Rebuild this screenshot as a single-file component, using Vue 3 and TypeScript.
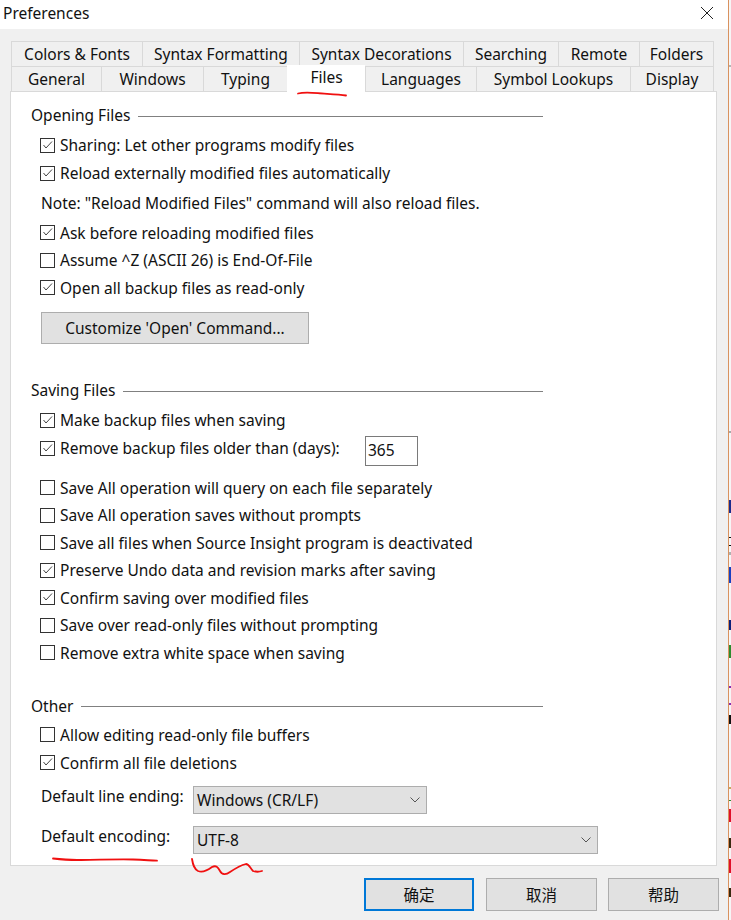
<script setup lang="ts">
const topTabs = [
  { label: 'Colors & Fonts', w: 131 },
  { label: 'Syntax Formatting', w: 157 },
  { label: 'Syntax Decorations', w: 164 },
  { label: 'Searching', w: 95 },
  { label: 'Remote', w: 81 },
  { label: 'Folders', w: 75 },
]
const bottomTabs = [
  { label: 'General', w: 90 },
  { label: 'Windows', w: 102 },
  { label: 'Typing', w: 84 },
  { label: 'Files', w: 78, active: true },
  { label: 'Languages', w: 111 },
  { label: 'Symbol Lookups', w: 154 },
  { label: 'Display', w: 84 },
]
const openingA = [
  { label: 'Sharing: Let other programs modify files', on: true },
  { label: 'Reload externally modified files automatically', on: true },
]
const openingB = [
  { label: 'Ask before reloading modified files', on: true },
  { label: 'Assume ^Z (ASCII 26) is End-Of-File', on: false },
  { label: 'Open all backup files as read-only', on: true },
]
const savingB = [
  { label: 'Save All operation will query on each file separately', on: false },
  { label: 'Save All operation saves without prompts', on: false },
  { label: 'Save all files when Source Insight program is deactivated', on: false },
  { label: 'Preserve Undo data and revision marks after saving', on: true },
  { label: 'Confirm saving over modified files', on: true },
  { label: 'Save over read-only files without prompting', on: false },
  { label: 'Remove extra white space when saving', on: false },
]
const other = [
  { label: 'Allow editing read-only file buffers', on: false },
  { label: 'Confirm all file deletions', on: true },
]
// bits of the window behind the dialog, visible past its right edge
const behind = [
  { y: 65, h: 2, c: '#b5b5b5' },
  { y: 431, h: 2, c: '#a8a8a8' },
  { y: 500, h: 13, c: '#1c2a8c' },
  { y: 537, h: 1, c: '#111' },
  { y: 545, h: 1, c: '#111' },
  { y: 552, h: 3, c: '#b0b0b0' },
  { y: 567, h: 16, c: '#1a3fc0' },
  { y: 620, h: 10, c: '#0b1f7a' },
  { y: 645, h: 13, c: '#2e8b2e' },
  { y: 686, h: 2, c: '#8a2bb0' },
  { y: 703, h: 2, c: '#8a2bb0' },
  { y: 715, h: 9, c: '#111' },
  { y: 787, h: 2, c: '#c8a860' },
  { y: 800, h: 1, c: '#2e8b2e' },
  { y: 809, h: 13, c: '#e0102a' },
  { y: 838, h: 10, c: '#3a2a10' },
  { y: 859, h: 14, c: '#e0102a' },
  { y: 888, h: 9, c: '#3a2a10' },
]
</script>

<template>
  <div class="screen">
    <div class="dialog">
      <div class="titlebar">
        <span class="title">Preferences</span>
        <svg class="close" width="14" height="14" viewBox="0 0 14 14">
          <path d="M1 1L13 13M13 1L1 13" stroke="#222" stroke-width="1" fill="none" />
        </svg>
      </div>

      <div class="body">
        <div class="tabs">
          <div class="tab-row">
            <div v-for="t in topTabs" :key="t.label" class="tab" :style="{ width: t.w + 'px' }">{{ t.label }}</div>
          </div>
          <div class="tab-row">
            <div
              v-for="t in bottomTabs"
              :key="t.label"
              class="tab"
              :class="{ active: t.active }"
              :style="{ width: t.w + 'px' }"
            >{{ t.label }}</div>
          </div>
        </div>

        <div class="panel">
          <div class="heading"><span>Opening Files</span><i></i></div>
          <div class="rows first">
            <label v-for="c in openingA" :key="c.label" class="check">
              <span class="box"><svg v-if="c.on" width="13" height="13" viewBox="0 0 13 13"><path d="M2.5 6L5 9L11 2.5" stroke="#444" stroke-width="1" fill="none" /></svg></span>
              {{ c.label }}
            </label>
            <div class="note">Note: "Reload Modified Files" command will also reload files.</div>
            <label v-for="c in openingB" :key="c.label" class="check">
              <span class="box"><svg v-if="c.on" width="13" height="13" viewBox="0 0 13 13"><path d="M2.5 6L5 9L11 2.5" stroke="#444" stroke-width="1" fill="none" /></svg></span>
              {{ c.label }}
            </label>
          </div>
          <button class="btn customize">Customize 'Open' Command...</button>

          <div class="heading saving"><span>Saving Files</span><i></i></div>
          <div class="rows first">
            <label class="check">
              <span class="box"><svg width="13" height="13" viewBox="0 0 13 13"><path d="M2.5 6L5 9L11 2.5" stroke="#444" stroke-width="1" fill="none" /></svg></span>
              Make backup files when saving
            </label>
            <div class="check">
              <span class="box"><svg width="13" height="13" viewBox="0 0 13 13"><path d="M2.5 6L5 9L11 2.5" stroke="#444" stroke-width="1" fill="none" /></svg></span>
              <span class="days-label">Remove backup files older than (days):</span>
              <span class="days-input">365</span>
            </div>
          </div>
          <div class="rows later">
            <label v-for="c in savingB" :key="c.label" class="check">
              <span class="box"><svg v-if="c.on" width="13" height="13" viewBox="0 0 13 13"><path d="M2.5 6L5 9L11 2.5" stroke="#444" stroke-width="1" fill="none" /></svg></span>
              {{ c.label }}
            </label>
          </div>

          <div class="heading other"><span>Other</span><i></i></div>
          <div class="rows first other-rows">
            <label v-for="c in other" :key="c.label" class="check">
              <span class="box"><svg v-if="c.on" width="13" height="13" viewBox="0 0 13 13"><path d="M2.5 6L5 9L11 2.5" stroke="#444" stroke-width="1" fill="none" /></svg></span>
              {{ c.label }}
            </label>
          </div>

          <div class="field">
            <span class="field-label">Default line ending:</span>
            <div class="select short">
              Windows (CR/LF)
              <svg width="10" height="6" viewBox="0 0 10 6"><path d="M0.5 0.5L5 5L9.5 0.5" stroke="#555" fill="none" /></svg>
            </div>
          </div>
          <div class="field">
            <span class="field-label">Default encoding:</span>
            <div class="select wide">
              UTF-8
              <svg width="10" height="6" viewBox="0 0 10 6"><path d="M0.5 0.5L5 5L9.5 0.5" stroke="#555" fill="none" /></svg>
            </div>
          </div>
        </div>

        <div class="actions">
          <button class="btn action primary">确定</button>
          <button class="btn action">取消</button>
          <button class="btn action">帮助</button>
        </div>
      </div>
    </div>

    <div class="strip">
      <span
        v-for="b in behind"
        :key="b.y"
        class="bit"
        :style="{ top: b.y + 'px', height: b.h + 'px', background: b.c }"
      ></span>
    </div>

    <svg class="ink" width="731" height="920" viewBox="0 0 731 920">
      <path d="M298 93.5C304 92 310 92.5 318 93.2S338 94 346 95.5" />
      <path d="M53 858.5C62 859.5 70 860 77 860S120 859 133 859.5S150 860.5 157 860.7" />
      <path d="M192 859C193 865 194 869 198 871C203 873 208 870 212 867C216 865 218 867 220 871C222 875 226 875 230 872C236 868 242 865 246 864C249 864 250 868 253 871C256 872 259 872 262 871" />
    </svg>
  </div>
</template>

<style>
html,
body {
  margin: 0;
  background: #fff;
}
</style>

<style scoped>
.screen {
  position: relative;
  display: flex;
  width: 731px;
  height: 920px;
  overflow: hidden;
  font-family: "Noto Sans", "Noto Sans CJK SC", sans-serif;
  font-size: 15.5px;
  color: #111;
}

.dialog {
  width: 728px;
  height: 920px;
  flex: none;
  display: flex;
  flex-direction: column;
  background: #f0f0f0;
  border-right: 1px solid #d9925f;
}

.titlebar {
  box-sizing: border-box;
  height: 29px;
  flex: none;
  background: #fff;
  display: flex;
  align-items: center;
  justify-content: space-between;
  padding: 0 14px 3px 3px;
}

.body {
  flex: 1;
  padding: 12px 0 0 10px;
}

.tabs {
  padding-left: 1px;
}

.tab-row {
  display: flex;
  height: 25px;
}

.tab {
  box-sizing: border-box;
  height: 26px;
  line-height: 24px;
  text-align: center;
  background: #f0f0f0;
  border: 1px solid #d9d9d9;
  border-right-width: 0;
}

.tab:last-child {
  border-right-width: 1px;
}

.tab.active {
  position: relative;
  z-index: 2;
  height: 28px;
  margin-top: -1px;
  line-height: 22px;
  background: #fff;
  border-color: #fff;
}

.panel {
  box-sizing: border-box;
  width: 707px;
  height: 775px;
  padding: 14px 0 0 20px;
  background: #fff;
  border: 1px solid #d9d9d9;
  position: relative;
  z-index: 1;
}

.heading {
  display: flex;
  align-items: center;
  height: 20px;
  width: 512px;
  gap: 8px;
}

.heading span {
  position: relative;
  top: -1px;
}

.heading i {
  flex: 1;
  height: 1px;
  background: #808080;
}

.saving {
  margin-top: 37px;
}

.other {
  margin-top: 30px;
}

.rows {
  display: flex;
  flex-direction: column;
  padding-left: 9px;
}

.first {
  margin-top: 5px;
}

.other-rows {
  margin-top: 4px;
}

.later {
  margin-top: 12px;
}

.check {
  display: flex;
  align-items: center;
  gap: 5px;
  height: 27.5px;
  white-space: nowrap;
  line-height: 24px;
}

.first .check {
  height: 28px;
}

.first .note ~ .check {
  height: 27.5px;
}

.box {
  box-sizing: border-box;
  width: 15px;
  height: 15px;
  flex: none;
  background: #fff;
  border: 1px solid #333;
  display: flex;
  align-items: center;
  justify-content: center;
}

.note {
  height: 28px;
  line-height: 29px;
  margin: 2px 0;
  padding-left: 1px;
}

.btn {
  font: inherit;
  color: inherit;
  background: #e1e1e1;
  border: 1px solid #adadad;
  padding: 0;
}

.customize {
  display: block;
  width: 268px;
  height: 32px;
  margin: 10.5px 0 0 10px;
}

.days-label {
  width: 300px;
}

.days-input {
  box-sizing: border-box;
  width: 53px;
  height: 30px;
  line-height: 26px;
  margin-top: 6px;
  padding-left: 2px;
  border: 1px solid #7a7a7a;
}

.field {
  display: flex;
  height: 28px;
  margin-top: 12px;
  padding-left: 10px;
}

.rows + .field {
  margin-top: 9px;
}

.field-label {
  width: 152px;
  line-height: 20px;
  white-space: nowrap;
}

.select {
  box-sizing: border-box;
  height: 28px;
  padding: 0 6px 0 3px;
  background: #e1e1e1;
  border: 1px solid #adadad;
  display: flex;
  align-items: center;
  justify-content: space-between;
}

.short {
  width: 234px;
}

.wide {
  width: 405px;
}

.actions {
  display: flex;
  gap: 11px;
  padding-left: 354px;
  margin-top: 12px;
}

.action {
  width: 111px;
  height: 33px;
}

.primary {
  width: 110px;
  margin-right: 1px;
  border: 2px solid #0078d7;
}

.strip {
  flex: 1;
  position: relative;
  background: #f6f6f6;
}

.bit {
  position: absolute;
  left: 0;
  width: 2px;
}

.ink {
  position: absolute;
  left: 0;
  top: 0;
  z-index: 5;
  pointer-events: none;
}

.ink path {
  fill: none;
  stroke: #f01010;
  stroke-width: 1.8;
  stroke-linecap: round;
}
</style>
